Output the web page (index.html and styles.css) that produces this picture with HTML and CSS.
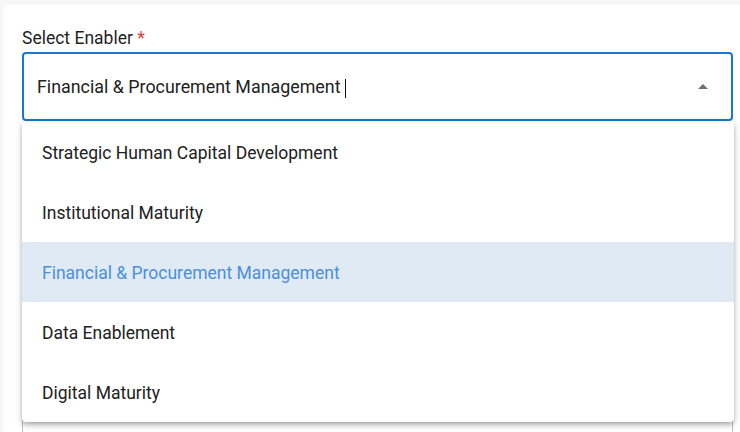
FILE: index.html
```html
<!DOCTYPE html>
<html>
<head>
<meta charset="utf-8">
<link rel="stylesheet" href="styles.css">
</head>
<body>
<div class="card">
  <div class="field">
    <label class="label">Select Enabler <span class="req">*</span></label>
    <div class="select-wrap">
      <div class="input focused">
        <span class="value">Financial &amp; Procurement Management</span><span class="caret"></span>
        <svg class="arrow" viewBox="0 0 24 24" width="24" height="24"><path d="M7 14l5-5 5 5z"/></svg>
      </div>
      <ul class="menu">
        <li class="opt">Strategic Human Capital Development</li>
        <li class="opt">Institutional Maturity</li>
        <li class="opt selected">Financial &amp; Procurement Management</li>
        <li class="opt">Data Enablement</li>
        <li class="opt">Digital Maturity</li>
      </ul>
    </div>
  </div>
  <div class="field next">
    <div class="input plain"></div>
  </div>
</div>
</body>
</html>
```

FILE: styles.css
```css
* { box-sizing: border-box; }
html, body { margin: 0; padding: 0; }
body {
  background: #f7f7f7;
  font-family: Roboto, "Noto Sans", Arial, sans-serif;
  color: #212121;
  width: 740px;
  height: 432px;
  overflow: hidden;
}
.card {
  margin: 5px 0 0 3px;
  background: #fff;
  border-radius: 6px 0 0 0;
  padding: 21px 6px 0 19px;
  height: 427px;
  overflow: hidden;
}
.field { display: flex; flex-direction: column; }
.label {
  font-size: 17.5px;
  line-height: 24px;
  color: #1f1f1f;
  margin-bottom: 2px;
}
.req { color: #e53935; }
.select-wrap { position: relative; }
.input {
  height: 69px;
  width: 711px;
  border-radius: 4px;
  display: flex;
  align-items: center;
  padding: 0 13px;
  font-size: 17.85px;
  color: #212121;
}
.input.focused { border: 2px solid #1976d2; }
.caret {
  display: inline-block;
  width: 1px;
  height: 19px;
  background: #111;
  margin-left: 5px;
  margin-top: 3px;
}
.arrow {
  margin-left: auto;
  margin-right: 3px;
  fill: #707070;
}
.menu {
  position: absolute;
  top: 70px;
  left: 0;
  width: 712px;
  margin: 0;
  padding: 0;
  list-style: none;
  background: #fff;
  border-radius: 0 0 4px 4px;
  box-shadow: 0 2px 4px -1px rgba(0,0,0,.2), 0 4px 5px 0 rgba(0,0,0,.14), 0 1px 10px 0 rgba(0,0,0,.12);
  z-index: 5;
}
.opt {
  height: 60px;
  display: flex;
  align-items: center;
  padding-left: 20px;
  padding-top: 2px;
  font-size: 17.5px;
  color: #212121;
}
.opt.selected {
  background: #e0eaf5;
  color: #4a8fdf;
}
.next { margin-top: 40px; }
.input.plain {
  border: 1px solid #bdbdbd;
  height: 300px;
}
```
